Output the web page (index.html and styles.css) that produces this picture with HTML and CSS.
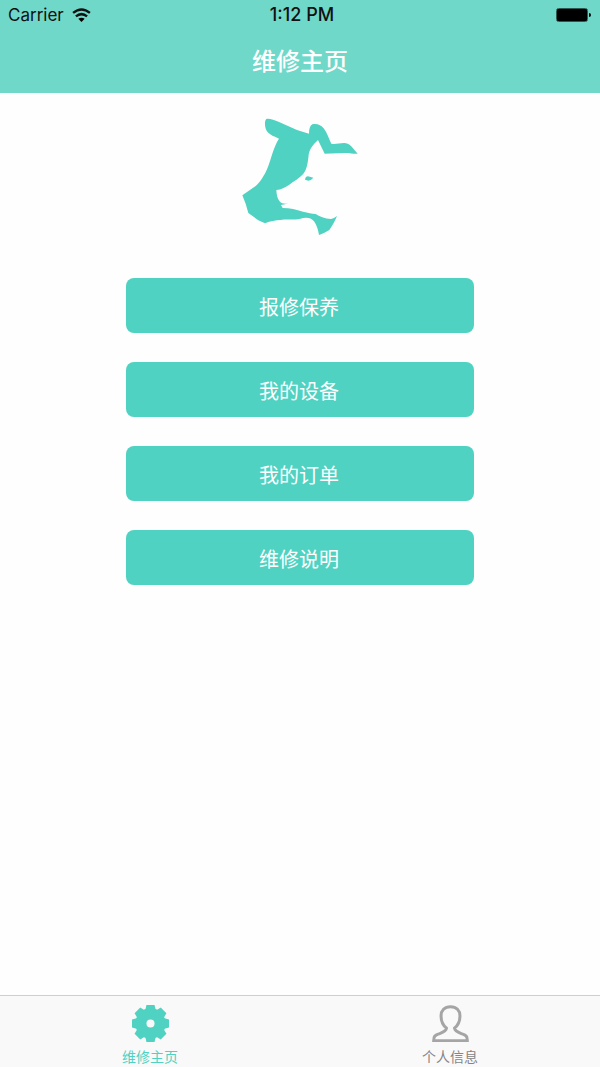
FILE: index.html
```html
<!DOCTYPE html>
<html lang="zh-CN">
<head>
<meta charset="utf-8">
<meta name="viewport" content="width=device-width, initial-scale=1">
<title>维修主页</title>
<link rel="stylesheet" href="styles.css">
</head>
<body class="screen">
  <header class="top">
    <div class="status">
      <span class="carrier">Carrier
        <svg class="wifi" viewBox="0 0 54 40" aria-hidden="true">
          <path class="wave" d="M3 14Q27-6 51 14M11 24Q27 11 43 24"/>
          <path d="M18 31Q27 24 36 31L27 40Z"/>
        </svg>
      </span>
      <span class="time">1:12 PM</span>
      <svg class="battery" viewBox="0 0 36 14" aria-hidden="true">
        <rect class="case" x="0.5" y="0.5" width="31" height="13" rx="2"/>
        <rect x="1" y="1" width="30" height="12" rx="1"/>
        <path d="M33 5Q35 5 35 7T33 9Z"/>
      </svg>
    </div>
    <h1 class="title">维修主页</h1>
  </header>

  <main class="content">
    <svg class="logo" viewBox="30 24 360 354" role="img" aria-label="牛">
      <path d="M109 27C119 25 133 31 147 36L201 60L237 71C237 57 240 47 247 43C259 39 273 44 281 55C292 70 297 87 304 101C315 104 328 99 342 99C353 98 362 106 369 115L383 131C372 132 357 128 342 129L284 131L264 90C250 103 239 116 236 134C234 153 232 177 219 193C208 205 192 214 178 224C164 232 155 239 139 240C140 258 144 274 157 280Q166 282 174 280Q166 284 153 285L158 294C181 294 198 299 219 305C234 309 246 310 257 312C268 319 284 326 303 327Q312 325 321 318C314 336 307 347 298 360Q284 369 267 375C265 362 261 347 252 334C243 323 229 321 211 326C192 331 171 327 151 330C137 331 122 333 105 340L85 331L55 309L47 281L37 256L77 228C93 215 103 195 111 178C123 149 131 109 147 86C136 80 121 76 112 65C103 54 103 32 109 27Z"/>
      <path d="M225 209Q227 199 234 199L250 203Q244 211 235 212Z"/>
    </svg>
    <nav class="menu" aria-label="维修">
      <button class="action" type="button">报修保养</button>
      <button class="action" type="button">我的设备</button>
      <button class="action" type="button">我的订单</button>
      <button class="action" type="button">维修说明</button>
    </nav>
  </main>

  <nav class="tabs" aria-label="标签栏">
    <a class="tab active" href="#home" aria-current="page">
      <svg class="tab-icon" viewBox="0 0 110 110" aria-hidden="true">
        <g id="teeth">
          <path d="M43 0H67L71 16V94L67 110H43L39 94V16Z"/>
          <path d="M0 43V67L16 71H94L110 67V43L94 39H16Z"/>
        </g>
        <use href="#teeth" transform="rotate(45 55 55)"/>
        <circle cx="55" cy="55" r="45"/>
        <circle class="hole" cx="55" cy="55" r="12"/>
      </svg>
      <span>维修主页</span>
    </a>
    <a class="tab" href="#profile">
      <svg class="tab-icon outline" viewBox="0 0 110 110" aria-hidden="true">
        <path d="M55 5C38 5 26 16 27 34C27 49 34 61 43 69C42 79 31 82 20 86C8 90 5 94 5 106H105C105 94 102 90 90 86C79 82 68 79 67 69C76 61 83 49 83 34C84 16 72 5 55 5Z"/>
      </svg>
      <span>个人信息</span>
    </a>
  </nav>
</body>
</html>
```
FILE: styles.css
```css
* {
  box-sizing: border-box;
}

.screen {
  display: flex;
  flex-direction: column;
  min-height: 100vh;
  margin: 0;
  background: #fefefe;
  font-family: Inter, "Noto Sans CJK SC", sans-serif;
}

.top {
  padding-bottom: 13px;
  background: #6fd8c9;
}

.status {
  display: grid;
  grid-template-columns: 1fr auto 1fr;
  align-items: center;
  height: 30px;
  padding: 0 8px;
  color: #111;
  font-size: 17px;
  line-height: 20px;
}

.carrier {
  display: flex;
  align-items: center;
  gap: 8px;
}

.wifi {
  width: 19px;
  height: 14px;
}

.wave {
  fill: none;
  stroke: #111;
  stroke-width: 7;
}

.time {
  padding-left: 4px;
  font-size: 18px;
  font-weight: 500;
}

.battery {
  justify-self: end;
  width: 36px;
  height: 14px;
}

.case {
  fill: none;
  stroke: #2c5a53;
}

.title {
  margin: 0;
  padding-top: 14px;
  color: #fff;
  font-size: 24px;
  font-weight: 500;
  line-height: 36px;
  text-align: center;
}

.content {
  flex: 1;
  display: flex;
  flex-direction: column;
  align-items: center;
  gap: 42px;
  padding: 25px 0 32px;
}

.logo {
  width: 120px;
  height: 118px;
  fill: #50d2c2;
}

.menu {
  display: grid;
  gap: 29px;
  width: 58%;
}

.action {
  height: 55px;
  padding: 2px 2px 0 0;
  border: 0;
  border-radius: 8px;
  background: #50d2c2;
  color: #fff;
  font: inherit;
  font-size: 20px;
}

.tabs {
  display: grid;
  grid-template-columns: 1fr 1fr;
  border-top: 1px solid #cfcfcf;
  background: #f9f9f9;
}

.tab {
  display: flex;
  flex-direction: column;
  align-items: center;
  gap: 5px;
  padding-top: 9px;
  color: #858585;
  font-size: 14px;
  line-height: 20px;
  text-decoration: none;
}

.active {
  color: #50d2c2;
}

.tab-icon {
  width: 37px;
  height: 37px;
  fill: currentColor;
}

.outline {
  fill: none;
  stroke: #a5a5a5;
  stroke-width: 9;
}

.hole {
  fill: #f9f9f9;
}
```
